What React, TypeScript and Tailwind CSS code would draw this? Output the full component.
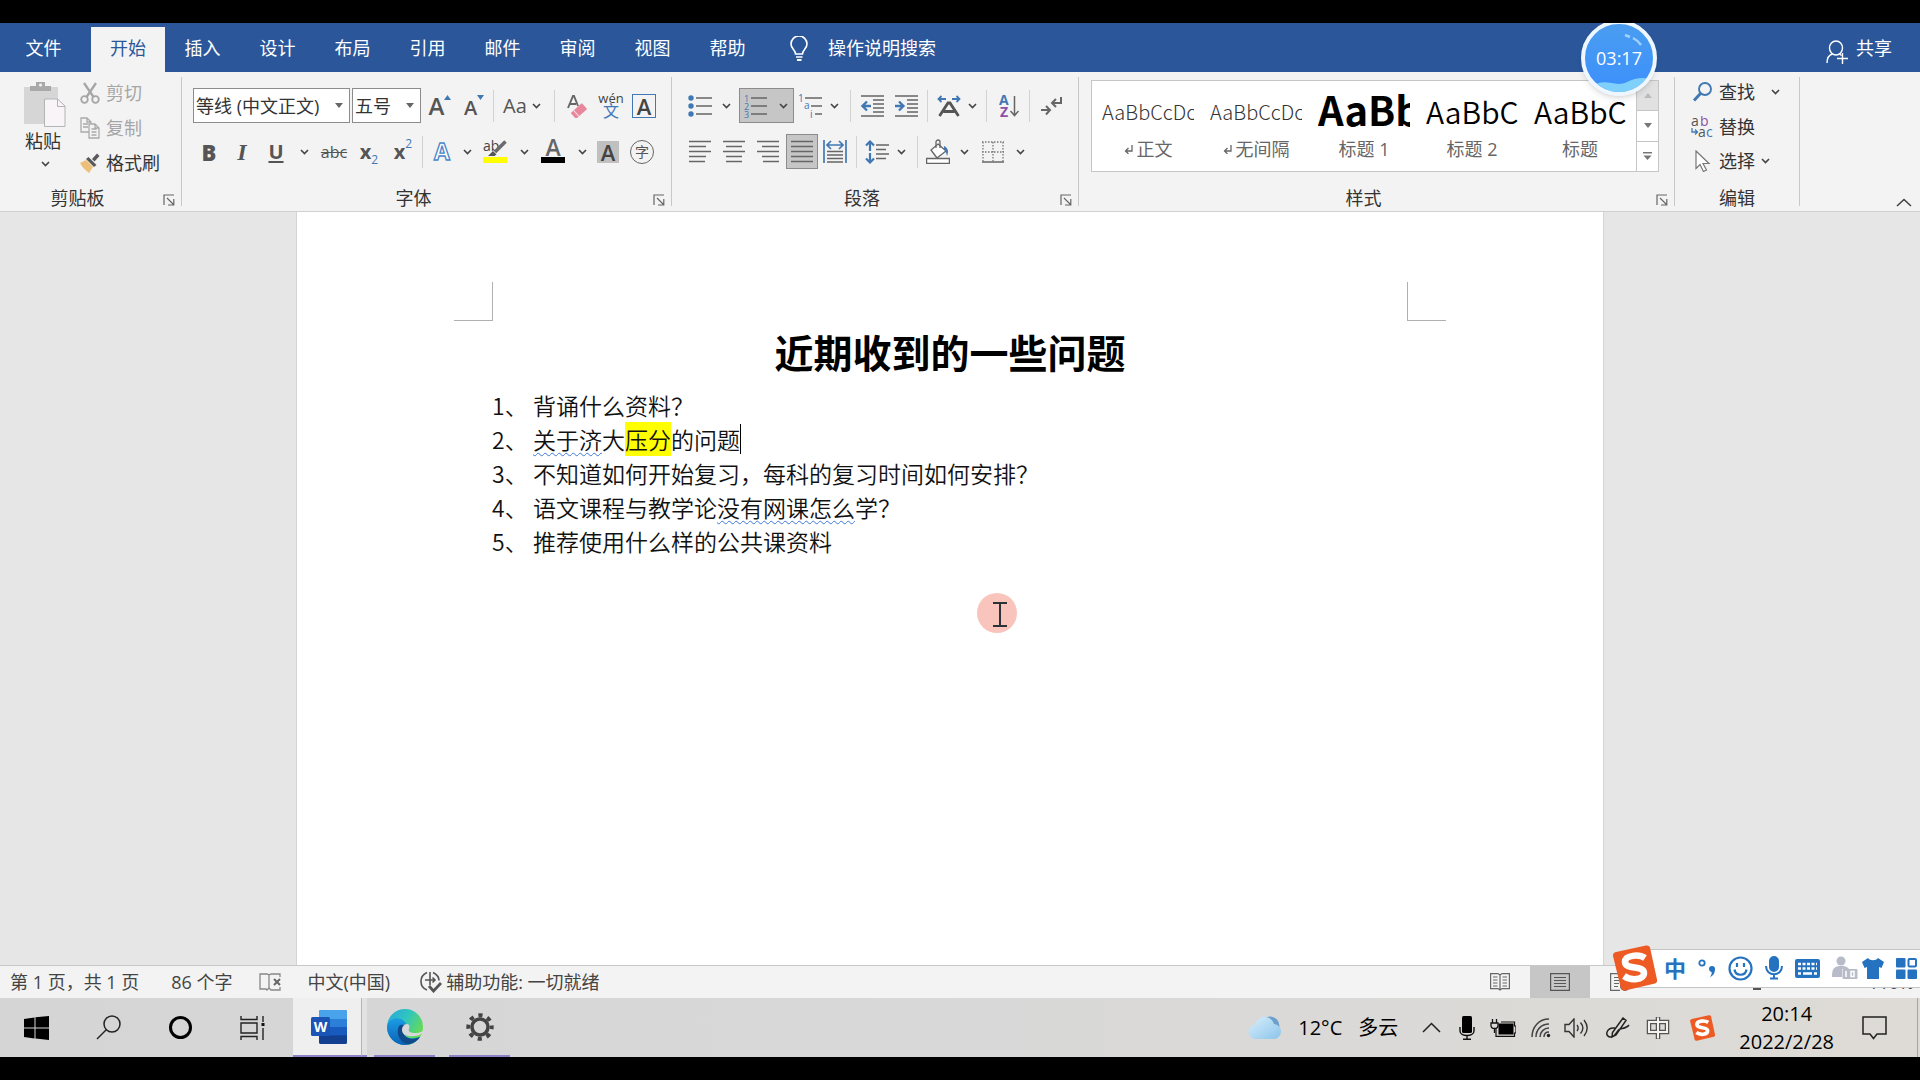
import type { ReactNode } from 'react'

const BLUE = '#4178b4'
const GREY = '#555555'

const TABS = ['插入', '设计', '布局', '引用', '邮件', '审阅', '视图', '帮助']

const STYLES = [
  { name: '正文', sample: 'AaBbCcDc', mark: true, look: 'text-xl leading-[62px] font-light' },
  { name: '无间隔', sample: 'AaBbCcDc', mark: true, look: 'text-xl leading-[62px] font-light' },
  { name: '标题 1', sample: 'AaBb', mark: false, look: 'text-[40px] leading-[56px] font-bold text-black' },
  { name: '标题 2', sample: 'AaBbC', mark: false, look: 'text-3xl leading-[60px] font-[350] text-black' },
  { name: '标题', sample: 'AaBbC', mark: false, look: 'text-3xl leading-[60px] font-[350] text-black' },
]

function Chevron({ className = 'w-5' }: { className?: string }) {
  return (
    <span className={`flex shrink-0 justify-center ${className}`}>
      <svg width="9" height="6" viewBox="0 0 9 6" fill="none" stroke="#444" strokeWidth="1.6">
        <path d="M1 1l3.5 3.5L8 1" />
      </svg>
    </span>
  )
}

function Tool({ label, className = 'w-[34px]', children }: { label: string; className?: string; children: ReactNode }) {
  return (
    <button type="button" aria-label={label} className={`flex h-full shrink-0 items-center justify-center ${className}`}>
      {children}
    </button>
  )
}

function Divider({ className = '' }: { className?: string }) {
  return <span className={`h-8 w-px shrink-0 bg-[#d2d2d2] ${className}`} />
}

function Group({ name, launcher, className, children }: { name: string; launcher?: boolean; className: string; children: ReactNode }) {
  return (
    <>
      <section aria-label={name} className={`flex shrink-0 flex-col ${className}`}>
        <div className="flex-1">{children}</div>
        <div className="mb-px flex h-6 items-center">
          <span className="flex-1 text-center">{name}</span>
          {launcher && (
            <button type="button" aria-label={`${name}设置`} className="flex w-[26px] justify-end pt-1 pr-1.5">
              <svg className="shrink-0" width="12" height="12" viewBox="0 0 12 12" fill="none" stroke="#666" strokeWidth="1.2">
                <path d="M1 11V1h10M4 4l6.5 6.5M10.8 5v6H5" />
              </svg>
            </button>
          )}
        </div>
      </section>
      <span className="mt-[5px] mb-[5px] w-px shrink-0 bg-[#c8c8c8]" />
    </>
  )
}

/* horizontal rules of paragraph icons, each one [x1, x2] */
function Lines({ rows, step = 5 }: { rows: number[][]; step?: number }) {
  return (
    <svg width="22" height="23" viewBox="0 0 22 23" stroke="#666" strokeWidth="1.5">
      {rows.map(([a, b], i) => (
        <path key={i} d={`M${a} ${1.5 + i * step}H${b}`} />
      ))}
    </svg>
  )
}

function Clipboard() {
  return (
    <Group name="剪贴板" launcher className="w-[181px]">
      <div className="flex pt-[3px]">
        <button type="button" className="flex w-[72px] flex-col items-center pt-1.5 pl-[18px]">
          <svg width="42" height="46" viewBox="0 0 42 46">
            <path d="M0 6h34v37H0z" fill="#d6d6d6" />
            <path d="M6 10V5h6V1h9v4h6v5z" fill="#a9a9a9" />
            <circle cx="16.500" cy="4" r="1.600" fill="#f3f3f3" />
            <path d="M20.500 18h13l7.500 7v20.500H20.500z" fill="#f8f4f8" stroke="#b4b4b4" />
            <path d="M33.500 18v7.500H41" fill="none" stroke="#b4b4b4" />
          </svg>
          <span className="mt-0.5 pr-1 leading-6">粘贴</span>
          <Chevron className="mt-2 w-5" />
        </button>
        <div className="flex flex-col pl-2">
          <button type="button" className="flex h-[35px] items-center gap-1.5 text-[#a6a6a6]">
            <svg width="20" height="22" viewBox="0 0 20 22" fill="none" stroke="#a6a6a6" strokeWidth="1.8">
              <circle cx="4.500" cy="17.500" r="3.300" />
              <circle cx="15.500" cy="17.500" r="3.300" />
              <path d="M4 1l9.500 14M16 1L6.500 15" strokeWidth="2.300" />
            </svg>
            剪切
          </button>
          <button type="button" className="flex h-[35px] items-center gap-1.5 text-[#a6a6a6]">
            <svg width="20" height="22" viewBox="0 0 20 22" fill="#f3f3f3" stroke="#ababab" strokeWidth="1.300">
              <path d="M1 1h6l4 4v10H1zM7 1v4h4M3 7h5M3 10h5" />
              <path d="M9 7h6l4 4v10H9zM15 7v4h4M11.500 12h5M11.500 15h5M11.500 18h5" />
            </svg>
            复制
          </button>
          <button type="button" className="flex h-[35px] items-center gap-1.5">
            <svg width="20" height="20" viewBox="0 0 20 20">
              <path d="M0 10l6-3 7 7-4 6c-4-3-7-6-9-10z" fill="#eebf78" />
              <path d="M6 6l2.500-2 8 8-2.500 2z" fill="#5a5a5a" />
              <path d="M12 6l5-5.500 2.500 2.500-5 5.500z" fill="#5a5a5a" />
            </svg>
            格式刷
          </button>
        </div>
      </div>
    </Group>
  )
}

function Combo({ label, value, className }: { label: string; value: string; className: string }) {
  return (
    <span className={`relative mr-0.5 flex h-[35px] shrink-0 ${className}`}>
      <select aria-label={label} className="w-full appearance-none border border-[#8c8c8c] bg-white pl-0.5 text-[#333]">
        <option>{value}</option>
      </select>
      <svg className="pointer-events-none absolute top-[15px] right-[7px]" width="8" height="5" viewBox="0 0 8 5">
        <path d="M0 0h8L4 5z" fill="#666" />
      </svg>
    </span>
  )
}

function FontGroup() {
  return (
    <Group name="字体" launcher className="w-[489px]">
      <div className="flex flex-col gap-[11px] pt-4 pl-[11px] text-[#555]">
        <div className="flex h-[35px] items-center">
          <Combo label="字体" value="等线 (中文正文)" className="w-[157px]" />
          <Combo label="字号" value="五号" className="w-[69px]" />
          <Tool label="增大字号">
            <span className="text-2xl leading-none font-semibold">A</span>
            <svg className="mb-4" width="7" height="5" viewBox="0 0 7 5"><path d="M0 5h7L3.500 0z" fill={BLUE} /></svg>
          </Tool>
          <Tool label="减小字号">
            <span className="pt-1 text-xl leading-none font-semibold">A</span>
            <svg className="mb-4" width="7" height="5" viewBox="0 0 7 5"><path d="M0 0h7L3.500 5z" fill={BLUE} /></svg>
          </Tool>
          <Divider className="mx-0.5" />
          <Tool label="更改大小写" className="w-[58px]">
            <span className="text-xl font-medium">Aa</span>
            <Chevron />
          </Tool>
          <Divider className="mr-1.5" />
          <Tool label="清除格式">
            <svg width="22" height="24" viewBox="0 0 22 24">
              <path d="M1 14L6 2h1l4 10M3 10h6" fill="none" stroke="#666" strokeWidth="1.900" />
              <g transform="rotate(-42 13 16)">
                <rect x="4" y="12" width="15" height="8" rx="1" fill="#e8879c" />
                <path d="M8 12v8" stroke="#f7d5dc" strokeWidth="1.200" />
              </g>
            </svg>
          </Tool>
          <Tool label="拼音指南" className="w-8 flex-col">
            <span className="text-[13px] leading-[10px] text-[#444]">wén</span>
            <span className="text-base leading-4 text-[#3f78b8]">文</span>
          </Tool>
          <Tool label="字符边框">
            <span className="flex size-6 items-center justify-center border border-[#4178b4] text-[22px] leading-none font-semibold text-[#444]">A</span>
          </Tool>
        </div>
        <div className="flex h-[35px] items-center">
          <Tool label="加粗" className="w-8"><span className="text-[22px] leading-none font-extrabold">B</span></Tool>
          <Tool label="倾斜"><span className="font-['Liberation_Serif',serif] text-2xl leading-none font-bold italic">I</span></Tool>
          <Tool label="下划线"><span className="text-xl font-bold underline decoration-2 underline-offset-2">U</span></Tool>
          <Chevron className="w-[23px]" />
          <Tool label="删除线" className="w-9"><span className="text-base line-through">abc</span></Tool>
          <Tool label="下标">
            <span className="text-xl leading-none font-bold">x</span>
            <span className="mt-4 text-xs leading-none text-[#4178b4]">2</span>
          </Tool>
          <Tool label="上标">
            <span className="text-xl leading-none font-bold">x</span>
            <span className="mb-4 text-xs leading-none text-[#4178b4]">2</span>
          </Tool>
          <Divider className="mx-0.5" />
          <Tool label="文本效果">
            <svg width="22" height="24" viewBox="0 0 22 24">
              <text x="11" y="20" textAnchor="middle" fontSize="23" fontWeight="700" fill="#fff" stroke="#4a86c8" strokeWidth="1.300">A</text>
            </svg>
          </Tool>
          <Chevron className="w-4" />
          <Tool label="突出显示" className="w-10">
            <svg width="24" height="25" viewBox="0 0 24 25">
              <text x="0" y="12" fontSize="14" fill="#444">ab</text>
              <path d="M22.500 2.500L12 13" stroke="#6b6b6b" strokeWidth="3.500" />
              <path d="M5 17l5-5 3.500 3.500-2 1.500z" fill="#555" />
              <path d="M0 18h24v6H0z" fill="#ff0" />
            </svg>
          </Tool>
          <Chevron className="w-[18px]" />
          <Tool label="字体颜色" className="w-10">
            <svg width="24" height="25" viewBox="0 0 24 25">
              <text x="12" y="17" textAnchor="middle" fontSize="23" fontWeight="600" fill="#666">A</text>
              <path d="M0 18h24v6H0z" />
            </svg>
          </Tool>
          <Chevron className="w-[18px]" />
          <Tool label="字符底纹">
            <span className="flex size-[22px] items-center justify-center bg-[#c0c0c0] text-[22px] leading-none font-semibold text-[#444]">A</span>
          </Tool>
          <Tool label="带圈字符">
            <span className="flex size-6 items-center justify-center rounded-full border border-[#666] text-sm leading-none">字</span>
          </Tool>
        </div>
      </div>
    </Group>
  )
}

function ParagraphGroup() {
  return (
    <Group name="段落" launcher className="w-[406px]">
      <div className="flex flex-col gap-[11px] pt-4 pl-[11px]">
        <div className="flex h-[35px] items-center">
          <Tool label="项目符号">
            <svg width="24" height="24" viewBox="0 0 24 24" fill={BLUE} stroke="#666" strokeWidth="1.400">
              <path d="M8 4h16M8 12h16M8 20h16" />
              <g stroke="none"><circle cx="3" cy="4" r="2.700" /><circle cx="3" cy="12" r="2.700" /><circle cx="3" cy="20" r="2.700" /></g>
            </svg>
          </Tool>
          <Chevron className="w-[18px]" />
          <button type="button" aria-label="编号" className="ml-1 flex h-full w-[55px] items-center justify-between border border-[#8c8c8c] bg-[#c6c6c6] pl-1">
            <svg width="23" height="24" viewBox="0 0 23 24" fill={BLUE} fontSize="9">
              <text x="0" y="7.500">1</text><text x="0" y="15.500">2</text><text x="0" y="23.500">3</text>
              <path d="M7 4h16M7 12h16M7 20h16" stroke="#666" strokeWidth="1.400" />
            </svg>
            <Chevron />
          </button>
          <Tool label="多级列表" className="w-8">
            <svg width="24" height="24" viewBox="0 0 24 24" fill={BLUE} fontSize="10">
              <text x="0" y="7.500">1</text><text x="6" y="15">a</text><text x="12" y="23.500">i</text>
              <path d="M7 4h17M13 12h11M17 20h7" stroke="#666" strokeWidth="1.400" />
            </svg>
          </Tool>
          <Chevron className="w-4" />
          <Divider className="mr-1 ml-2" />
          <Tool label="减少缩进">
            <svg width="23" height="22" viewBox="0 0 23 22" fill="none">
              <path d="M0 1h23M12 5h11M12 9h11M12 13h11M12 17h11M0 21h23" stroke="#666" strokeWidth="1.300" />
              <path d="M10 11H2M6 6.500L1.500 11 6 15.500" stroke={BLUE} strokeWidth="2.300" />
            </svg>
          </Tool>
          <Tool label="增加缩进">
            <svg width="23" height="22" viewBox="0 0 23 22" fill="none">
              <path d="M0 1h23M12 5h11M12 9h11M12 13h11M12 17h11M0 21h23" stroke="#666" strokeWidth="1.300" />
              <path d="M0 11h8M4 6.500L8.500 11 4 15.500" stroke={BLUE} strokeWidth="2.300" />
            </svg>
          </Tool>
          <Divider className="mx-1" />
          <Tool label="中文版式">
            <svg width="24" height="22" viewBox="0 0 24 22" fill="none">
              <path d="M9 4H1.500M4.500 1L1.500 4l3 3M15 4h7.500M19.500 1l3 3-3 3" stroke={BLUE} strokeWidth="1.800" />
              <path d="M2.500 21L11 8h2l8.500 13M6.500 16.500h11" stroke={GREY} strokeWidth="2.800" />
            </svg>
          </Tool>
          <Chevron className="w-3" />
          <Divider className="mr-1.5 ml-2" />
          <Tool label="排序" className="w-8">
            <svg width="20" height="24" viewBox="0 0 20 24">
              <text x="0" y="11" fontSize="14" fontWeight="700" fill={BLUE}>A</text>
              <text x="1" y="23" fontSize="14" fontWeight="700" fill="#8c50a8">Z</text>
              <path d="M15.500 2v19M11.500 17l4 4.500 4-4.500" fill="none" stroke="#666" strokeWidth="1.500" />
            </svg>
          </Tool>
          <Divider className="mx-1" />
          <Tool label="显示编辑标记">
            <svg width="21" height="20" viewBox="0 0 21 20" fill="none" stroke="#666" strokeWidth="2">
              <path d="M20 1v6h-8M15 3l-4 4 4 4M0 14h9M5 10l4 4-4 4.500" />
            </svg>
          </Tool>
        </div>
        <div className="flex h-[35px] items-center">
          <Tool label="左对齐"><Lines rows={[[0, 22], [0, 17], [0, 22], [0, 17], [0, 16]]} /></Tool>
          <Tool label="居中"><Lines rows={[[0, 22], [3, 19], [0, 22], [3, 19], [3, 19]]} /></Tool>
          <Tool label="右对齐"><Lines rows={[[0, 22], [5, 22], [0, 22], [5, 22], [6, 22]]} /></Tool>
          <Tool label="两端对齐" className="ml-px w-8 border border-[#8c8c8c] bg-[#c6c6c6]">
            <Lines rows={[[0, 22], [0, 22], [0, 22], [0, 22], [0, 22]]} />
          </Tool>
          <Tool label="分散对齐">
            <svg width="24" height="24" viewBox="0 0 24 24" fill="none">
              <path d="M1 0v23M23 0v23M4 5h16M8 1L4 5l4 4M16 1l4 4-4 4" stroke={BLUE} strokeWidth="1.700" />
              <path d="M4 11.500h16M4 15h16M4 18.500h16M4 22h16" stroke="#666" strokeWidth="1.400" />
            </svg>
          </Tool>
          <Divider className="mx-1" />
          <Tool label="行距" className="w-8">
            <svg width="24" height="24" viewBox="0 0 24 24" fill="none">
              <path d="M5 11V2M1 5.500l4-4 4 4M5 13v9M1 18.500l4 4 4-4" stroke={BLUE} strokeWidth="2.200" />
              <path d="M11 5h13M11 9.500h10M11 14h13M11 18.500h10" stroke="#666" strokeWidth="1.400" />
            </svg>
          </Tool>
          <Chevron className="w-4" />
          <Divider className="mr-1 ml-2" />
          <Tool label="底纹" className="w-8">
            <svg width="24" height="25" viewBox="0 0 24 25" fill="none" stroke="#666" strokeWidth="1.300">
              <path d="M12 5l8 7-9 7-6-8z" fill="#fff" />
              <path d="M10 9V3a2 2 0 014 0v6" />
              <path d="M18 7c4 2 5 5 3 10-1-4-2-6-3-7z" fill={BLUE} stroke="none" />
              <path d="M.600 19.500h22.800v5H.600z" fill="#fff" />
            </svg>
          </Tool>
          <Chevron />
          <Tool label="边框" className="ml-0.5 w-[34px]">
            <svg width="22" height="22" viewBox="0 0 22 22" fill="none" stroke="#777" strokeWidth="1.300">
              <path d="M0 1h22M1 1v20M21 1v20M11 1v20M0 11h22" strokeDasharray="1.500 1.500" />
              <path d="M0 21h22" strokeWidth="1.700" />
            </svg>
          </Tool>
          <Chevron />
        </div>
      </div>
    </Group>
  )
}

function StylesGroup() {
  return (
    <Group name="样式" launcher className="w-[595px]">
      <div className="pt-2 pl-3">
        <div className="flex h-[92px] w-[568px] border border-[#c6c6c6] bg-white">
          {STYLES.map(s => (
            <button key={s.name} type="button" className="flex w-[108px] flex-col items-center pr-1.5 pl-2.5">
              <span className={`h-[58px] w-full overflow-hidden text-left font-['Noto_Sans_CJK_SC',sans-serif] ${s.look}`}>
                {s.sample}
              </span>
              <span className="-mt-0.5 flex items-center gap-1 leading-6 text-[#666]">
                {s.mark && (
                  <svg width="9" height="10" viewBox="0 0 9 10" fill="none" stroke="#666" strokeWidth="1.300">
                    <path d="M8 1v6H2M4.500 4L1.500 7l3 3" />
                  </svg>
                )}
                {s.name}
              </span>
            </button>
          ))}
          <div className="ml-1 flex flex-1 flex-col border-l border-[#c6c6c6]">
            <button type="button" aria-label="上一行" className="flex flex-1 items-center justify-center bg-[#e1e1e1]">
              <svg width="8" height="5" viewBox="0 0 8 5"><path d="M0 5h8L4 0z" fill="#bbb" /></svg>
            </button>
            <button type="button" aria-label="下一行" className="flex flex-1 items-center justify-center border-y border-[#c6c6c6]">
              <svg width="8" height="5" viewBox="0 0 8 5"><path d="M0 0h8L4 5z" fill="#777" /></svg>
            </button>
            <button type="button" aria-label="其他" className="flex flex-1 items-center justify-center">
              <svg width="9" height="8" viewBox="0 0 9 8"><path d="M0 0h9v1.500H0zM.500 3.500h8L4.500 8z" fill="#777" /></svg>
            </button>
          </div>
        </div>
      </div>
    </Group>
  )
}

function EditGroup() {
  return (
    <Group name="编辑" className="w-[124px]">
      <div className="flex flex-col items-start pt-0.5 pl-4">
        <button type="button" className="flex h-[35px] items-center">
          <svg className="mr-1.5" width="22" height="20" viewBox="0 0 22 20" fill="none" stroke={BLUE}>
            <circle cx="14" cy="7" r="6" strokeWidth="1.900" />
            <path d="M9.500 11.500L3 18.500" strokeWidth="3" />
          </svg>
          查找
          <Chevron className="ml-2 w-6" />
        </button>
        <button type="button" className="flex h-[35px] items-center">
          <svg className="mr-1.5" width="22" height="22" viewBox="0 0 22 22" fontSize="14">
            <text x="0" y="10" fill="#555">a</text><text x="9" y="10" fill="#8c50a8">b</text>
            <text x="7" y="21" fill="#555">a</text><text x="15" y="21" fill={BLUE}>c</text>
            <path d="M1 12v4h5M4 13.500L6.500 16 4 18.500" fill="none" stroke={BLUE} strokeWidth="1.300" />
          </svg>
          替换
        </button>
        <button type="button" className="flex h-[34px] items-center">
          <svg className="mr-1.5" width="22" height="22" viewBox="0 0 22 22" fill="#fff" stroke="#777" strokeWidth="1.200">
            <path d="M5 1l13 12.500h-6l3.500 6.500-3 1.500-3.500-7-4 4z" />
          </svg>
          选择
          <Chevron className="w-5" />
        </button>
      </div>
    </Group>
  )
}

function TitleTabs() {
  return (
    <nav className="relative flex h-[49px] shrink-0 items-end bg-[#2b579a] text-white">
      <button type="button" className="h-[45px] w-[91px] pb-[3px] pr-1">文件</button>
      <button type="button" className="h-[45px] w-[74px] bg-[#f3f3f3] pb-[3px] text-[#2b579a]">开始</button>
      {TABS.map(tab => (
        <button key={tab} type="button" className="h-[45px] w-[75px] pb-[3px]">{tab}</button>
      ))}
      <button type="button" className="flex h-[45px] items-center gap-5 pb-[3px] pl-[25px]">
        <svg width="18" height="25" viewBox="0 0 18 25" fill="none" stroke="#fff" strokeWidth="1.600">
          <path d="M5.500 18c0-4-4.500-5-4.500-10a8 8 0 0116 0c0 5-4.500 6-4.500 10zM6 21h6.500" />
          <path d="M7 24h4.500" strokeWidth="2" />
        </svg>
        操作说明搜索
      </button>
      <button type="button" className="ml-auto flex h-[45px] items-center gap-2 pr-7 pb-[3px]">
        <svg className="mt-2" width="22" height="24" viewBox="0 0 22 24" fill="none" stroke="#fff" strokeWidth="1.400">
          <ellipse cx="10" cy="8" rx="6.500" ry="7" />
          <path d="M1 23c0-5 2-8 5.500-9M13.500 14l2 1.500M11 18.500h11M16.500 13v11" />
        </svg>
        共享
      </button>
      {/* recorder timer, floats over the ribbon */}
      <div className="absolute top-[-3px] right-[263px] z-10 flex size-[76px] items-center justify-center overflow-hidden rounded-full border-[4px] border-[#eef6ff] bg-linear-to-b from-[#4a9df0] to-[#3c8ffb] shadow-md">
        <svg className="absolute inset-0" width="68" height="68" viewBox="0 0 68 68">
          <path d="M8 62c12-9 22 2 34-4 8-4 15-5 24-3v15H8z" fill="#7fd0fb" />
          <path d="M40 11l5 2M48 14c4 2 6 4 8 7" stroke="#9fd0ff" strokeWidth="2.500" fill="none" />
        </svg>
        <span className="relative">03:17</span>
      </div>
    </nav>
  )
}

function Wavy({ children }: { children: ReactNode }) {
  return <span className="underline decoration-[#3f78d8] decoration-wavy decoration-1 underline-offset-3">{children}</span>
}

function Document() {
  return (
    <main className="flex flex-1 justify-center bg-[#e6e6e6] pr-5">
      <article className="w-[1308px] border-x border-[#d4d4d4] bg-white px-[157px] pt-[70px] font-['Noto_Sans_CJK_SC',sans-serif] text-[23px] font-[350] text-[#111]">
        <div className="flex justify-between">
          <span className="size-[39px] border-r border-b border-[#b0b0b0]" />
          <span className="size-[39px] border-b border-l border-[#b0b0b0]" />
        </div>
        <div className="px-[38px]">
          <h1 className="text-center text-[39px] leading-[60px] font-bold text-black">近期收到的一些问题</h1>
          <ol className="mt-[7px] leading-[34px]">
            <li className="flex"><span className="w-[41px]">1、</span><span>背诵什么资料？</span></li>
            <li className="flex">
              <span className="w-[41px]">2、</span>
              <span><Wavy>关于济</Wavy>大<mark className="bg-[#ff0] text-inherit">压分</mark>的问题</span>
              <span className="my-0.5 w-px bg-black" />
            </li>
            <li className="flex"><span className="w-[41px]">3、</span><span>不知道如何开始复习，每科的复习时间如何安排？</span></li>
            <li className="flex"><span className="w-[41px]">4、</span><span>语文课程与教学论<Wavy>没有网课怎么</Wavy>学？</span></li>
            <li className="flex"><span className="w-[41px]">5、</span><span>推荐使用什么样的公共课资料</span></li>
          </ol>
        </div>
      </article>
    </main>
  )
}

function SogouLogo({ size }: { size: number }) {
  return (
    <svg width={size} height={size} viewBox="0 0 46 46">
      <path d="M5 7L35 .500q3-.500 4 2l7 32q.500 3-2 4L14 45.500q-3 .500-4-2L2 11q-.500-3 3-4z" fill="#ee5a24" />
      <path d="M34 13c-6-4-20-3-20 4 0 8 19 3 19 11 0 7-13 8-20 3" fill="none" stroke="#fff" strokeWidth="6.500" />
    </svg>
  )
}

function InputBar() {
  return (
    <div className="absolute right-0 bottom-[7px] z-10 flex items-center">
      <span className="z-10 -mr-[22px]"><SogouLogo size={46} /></span>
      <div className="flex h-[39px] w-[285px] items-center gap-3 border-y border-[#c4c4c4] bg-white pl-[29px] text-[#2472c0]">
        <span className="text-[22px] leading-none font-bold">中</span>
        <svg width="18" height="20" viewBox="0 0 18 20">
          <circle cx="4" cy="5" r="2.700" fill="none" stroke="#2472c0" strokeWidth="1.800" />
          <path d="M11 11a3 3 0 116 0c0 4-2 7-5 8 1.500-2 2-3.500 1.500-5a3 3 0 01-2.500-3z" fill="#2472c0" />
        </svg>
        <svg width="25" height="25" viewBox="0 0 25 25" fill="none" stroke="#2472c0" strokeWidth="2.200">
          <circle cx="12.500" cy="12.500" r="11" />
          <path d="M6.500 13.500c1 7 11 7 12 0M9 7v4M16 7v4" />
        </svg>
        <svg width="18" height="24" viewBox="0 0 18 24" fill="none" stroke="#2472c0" strokeWidth="2">
          <rect x="5" y="1" width="8" height="14" rx="4" fill="#2472c0" />
          <path d="M1 10c0 11 16 11 16 0M9 18v5M5 22.500h8" />
        </svg>
        <svg width="25" height="19" viewBox="0 0 25 19">
          <rect width="25" height="19" rx="2" fill="#2472c0" />
          <path d="M3 5h19M3 9.500h19" stroke="#fff" strokeWidth="2.500" strokeDasharray="3 1.500" />
          <path d="M3 14.500h3M8 14.500h9M19 14.500h3" stroke="#fff" strokeWidth="2.500" />
        </svg>
        <svg className="-mr-2" width="26" height="24" viewBox="0 0 26 24" fill="#b8bcc8">
          <circle cx="9" cy="5" r="4.500" />
          <path d="M0 20c0-8 3-10 9-10s7 2 8 3h-7v8H0z" />
          <rect x="10.500" y="13" width="15" height="10" rx="1" />
          <path d="M14 15v6M19 15.500h3v5h-3z" stroke="#fff" strokeWidth="1.500" fill="none" />
        </svg>
        <svg width="22" height="21" viewBox="0 0 22 21">
          <path d="M6 0c2 3 8 3 10 0l6 4-2.500 6-2.500-1v12H5V9l-2.500 1L0 4z" fill="#2472c0" />
        </svg>
        <svg width="21" height="21" viewBox="0 0 21 21" fill="#2472c0">
          <rect width="9.500" height="9.500" rx="1" /><rect y="11.500" width="9.500" height="9.500" rx="1" />
          <rect x="11.500" y="11.500" width="9.500" height="9.500" rx="1" />
          <rect x="12.500" y="1" width="7.500" height="7.500" rx="1" fill="none" stroke="#2472c0" strokeWidth="2" />
        </svg>
      </div>
    </div>
  )
}

function StatusBar() {
  return (
    <footer className="relative flex h-[33px] shrink-0 items-center border-t border-[#c8c8c8] bg-[#f3f3f3] pl-2.5 text-[#444]">
      <span>第 1 页，共 1 页</span>
      <span className="ml-8">86 个字</span>
      <svg className="ml-[26px]" width="23" height="20" viewBox="0 0 23 20" fill="none" stroke="#888" strokeWidth="1.300">
        <path d="M10 3v13l-2 2-1-1H1V2h7zM10 3l2-1h9v3M10 16l2 2h9v-3" />
        <path d="M15 7l6 6M21 7l-6 6" strokeWidth="2" stroke="#666" />
      </svg>
      <span className="ml-[26px]">中文(中国)</span>
      <svg className="ml-[30px]" width="22" height="22" viewBox="0 0 22 22" fill="none" stroke="#555" strokeWidth="1.600">
        <path d="M7 1.500C-1 5-1 16 7 19M13 1.500c4 2 6 5 6 8M10 1v13M5 9h10M12.500 6.500L15 9l-2.500 2.500" />
        <path d="M9 15l4.500 5L21 12" strokeWidth="2.800" />
      </svg>
      <span className="ml-1">辅助功能: 一切就绪</span>
      <div className="ml-auto flex h-full items-center">
        <button type="button" aria-label="阅读视图" className="flex w-[60px] justify-center">
          <svg width="20" height="18" viewBox="0 0 20 18" fill="none" stroke="#666" strokeWidth="1.200">
            <path d="M10 2v15M10 2L8 .600H.600v15H8L10 17l2-1.400h7.400v-15H12zM3 4h4.500M3 7h4.500M3 10h4.500M3 13h4.500M12.500 4H17M12.500 7H17M12.500 10H17M12.500 13H17" />
          </svg>
        </button>
        <button type="button" aria-label="页面视图" className="flex h-full w-[60px] items-center justify-center bg-[#c6c6c6]">
          <svg width="20" height="18" viewBox="0 0 20 18" fill="none" stroke="#555" strokeWidth="1.200">
            <path d="M.600.600h18.800v16.800H.600zM4 4.500h12M4 7.500h12M4 10.500h12M4 13.500h12" />
          </svg>
        </button>
        <button type="button" aria-label="Web 版式" className="flex w-[60px] justify-center">
          <svg width="20" height="18" viewBox="0 0 20 18" fill="none" stroke="#666" strokeWidth="1.200">
            <path d="M10 17.400H.600V.600h18.800V8M4 4.500h12M4 7.500h8M4 10.500h5M4 13.500h4" />
            <circle cx="15" cy="13" r="4.400" />
          </svg>
        </button>
        <input
          type="range"
          aria-label="缩放"
          defaultValue={52}
          className="ml-4 w-[174px] appearance-none bg-transparent [&::-webkit-slider-thumb]:h-4 [&::-webkit-slider-thumb]:w-2 [&::-webkit-slider-thumb]:appearance-none [&::-webkit-slider-thumb]:bg-[#555]"
        />
        <span className="ml-7 pr-1.5">110%</span>
      </div>
      <InputBar />
    </footer>
  )
}

function Taskbar() {
  return (
    <footer className="flex h-[59px] shrink-0 items-stretch bg-linear-to-r from-[#d5d5d5] via-[#d8d8d8] to-[#dedbd6] text-black">
      <button type="button" aria-label="开始菜单" className="flex w-[72px] items-center justify-center">
        <svg width="25" height="24" viewBox="0 0 25 24">
          <path d="M0 3l10.500-1.500v10H0zM11.500 1.300L25 0v11.500H11.500zM0 12.500h10.500v10L0 21zM11.500 12.500H25V24l-13.500-1.500z" />
        </svg>
      </button>
      <button type="button" aria-label="搜索" className="flex w-[73px] items-center justify-center">
        <svg width="25" height="25" viewBox="0 0 25 25" fill="none" stroke="#222" strokeWidth="1.500">
          <circle cx="16" cy="9" r="8" /><path d="M10.500 14.500L1 24" />
        </svg>
      </button>
      <button type="button" aria-label="Cortana" className="flex w-[70px] items-center justify-center">
        <span className="size-[23px] rounded-full border-[3px] border-black" />
      </button>
      <button type="button" aria-label="任务视图" className="flex w-[78px] items-center justify-center pr-1">
        <svg width="25" height="24" viewBox="0 0 25 24" fill="none" stroke="#222" strokeWidth="1.400">
          <path d="M1 7h16v10H1zM1 0v3.500h16V0M1 24v-3.500h16V24M23 0v6M23 12v12" />
          <path d="M21.500 7h3v3h-3z" fill="#111" stroke="none" />
        </svg>
      </button>
      <button type="button" aria-label="Word" className="flex w-[68px] items-center justify-center border-b-2 border-[#8a83c8] bg-[#efefef] pl-1">
        <svg width="36" height="34" viewBox="0 0 36 34">
          <rect x="8" width="28" height="34" rx="2" fill="#1b4db0" />
          <path d="M10 0h24a2 2 0 012 2v7H8V2a2 2 0 012-2z" fill="#48a3ea" />
          <path d="M8 9h28v8H8z" fill="#2c7fd8" /><path d="M8 17h28v8.500H8z" fill="#185abd" /><path d="M8 25.500h28V32a2 2 0 01-2 2H10a2 2 0 01-2-2z" fill="#123f90" />
          <rect y="7" width="19" height="19" rx="1.500" fill="#1a54b4" />
          <text x="9.500" y="22" textAnchor="middle" fontSize="14" fontWeight="700" fill="#fff">W</text>
        </svg>
      </button>
      <span className="mr-[7px] w-1.5 border-b-2 border-l border-[#8a83c8] border-l-[#b5b5b5] bg-[#e2e2e2]" />
      <button type="button" aria-label="Edge" className="flex w-[61px] items-center justify-center border-b-2 border-[#8a83c8]">
        <svg width="36" height="36" viewBox="0 0 36 36">
          <defs>
            <linearGradient id="edgeTop" x1="0" y1="0" x2="1" y2=".600">
              <stop offset="0" stopColor="#23a6dd" /><stop offset=".500" stopColor="#30c5c0" /><stop offset="1" stopColor="#6bdc4c" />
            </linearGradient>
            <linearGradient id="edgeLow" x1="0" y1="0" x2="0" y2="1">
              <stop offset="0" stopColor="#1b9de2" /><stop offset="1" stopColor="#0d62b8" />
            </linearGradient>
          </defs>
          <circle cx="18" cy="18" r="18" fill="url(#edgeTop)" />
          <path d="M0 18C1 10 9 8 14 10c4 2 6 5 6 8-3-2-6 0-6 4 0 6 8 9 14 7l5-1c-3 5-9 8-15 8C8 36 0 28 0 18z" fill="url(#edgeLow)" />
          <path d="M12 17c-4 8 2 18 10 18 5-1 9-4 11-7-7 4-17 1-17-6 0-2 1-4 2-5-2-2-5-1-6 0z" fill="#114a8b" />
          <path d="M20 15c-3 0-5 3-5 6 0 5 6 7 12 6 3 0 6-1 9-3v-2c-3 2-10 3-13 1-2-1-1-3-.500-5 0-2-1-3-2.500-3z" fill="#d8d8d8" />
        </svg>
      </button>
      <button type="button" aria-label="设置" className="ml-3.5 flex w-[61px] items-center justify-center border-b-2 border-[#8a83c8]">
        <svg width="28" height="28" viewBox="0 0 28 28" fill="none" stroke="#444">
          <circle cx="14" cy="14" r="8" strokeWidth="3.500" />
          <circle cx="14" cy="14" r="11.700" strokeWidth="4" strokeDasharray="4.200 4.990" strokeDashoffset="2" />
        </svg>
      </button>

      <div className="ml-auto flex items-center">
        <button type="button" className="flex items-center gap-4 text-xl">
          <svg width="34" height="24" viewBox="0 0 34 24">
            <defs>
              <linearGradient id="cloud" x1="0" y1="0" x2="1" y2="1">
                <stop offset="0" stopColor="#d8effc" /><stop offset="1" stopColor="#8cc4ea" />
              </linearGradient>
            </defs>
            <circle cx="22" cy="10" r="9.500" fill="#6c9fcb" />
            <path d="M8 23a7 7 0 01-1-14C9 3 13 0 18 1c5 1 7 4 8 7a7.500 7.500 0 01-1 15z" fill="url(#cloud)" />
          </svg>
          <span>12°C</span>
          <span>多云</span>
        </button>
        <svg className="ml-6" width="19" height="11" viewBox="0 0 19 11" fill="none" stroke="#222" strokeWidth="1.500"><path d="M1 10l8.500-8.500L18 10" /></svg>
        <svg className="ml-[18px]" width="16" height="24" viewBox="0 0 16 24">
          <rect x="3" width="10" height="17" rx="1.500" />
          <path d="M1 11v4c0 6 14 6 14 0v-4M8 20v3M4 23.300h8" fill="none" stroke="#111" strokeWidth="1.400" />
        </svg>
        <svg className="ml-[15px]" width="26" height="18" viewBox="0 0 26 18">
          <rect x="8.500" y="4.500" width="15" height="11" />
          <path d="M6 10v7.300h18.500V14H26V7h-1.500V3H11" fill="none" stroke="#111" strokeWidth="1.200" />
          <path d="M2.500 0v4M6.500 0v4M1 4h7v2.500q0 3-3.500 3T1 6.500zM4.500 9v5" fill="none" stroke="#111" strokeWidth="1.300" />
        </svg>
        <svg className="ml-[15px]" width="20" height="20" viewBox="0 0 20 20" fill="none" stroke="#444" strokeWidth="1.500">
          <path d="M1 19C1 9 8 1 18 1M5 19c0-7 5-13 13-13M9 19c0-5 4-9 9-9M13 19c0-3 2-5 5-5" />
          <circle cx="17.500" cy="17.500" r="1.700" fill="#222" stroke="none" />
        </svg>
        <svg className="ml-[13px]" width="24" height="20" viewBox="0 0 24 20" fill="none" stroke="#333" strokeWidth="1.400">
          <path d="M1 6.500h4L10 1v18l-5-5.500H1zM13 7c1.500 2 1.500 4 0 6M16.500 4.500c3 3.500 3 7.500 0 11M20 2c4 5 4 11 0 16" />
        </svg>
        <svg className="ml-[18px]" width="24" height="22" viewBox="0 0 24 22" fill="none" stroke="#222" strokeWidth="1.500">
          <path d="M17 1l3 2.500L10 18l-4 2 .500-4.500zM9 11c-9-1-11 9-4 9 5 0 5-6 9-8 4-1 7-1 9-4" />
        </svg>
        {/* input mode indicator, hollow strokes */}
        <svg className="ml-[15px]" width="26" height="26" viewBox="0 0 26 26" fill="none">
          <path d="M4 7h18v10H4zM13 2v22" stroke="#555" strokeWidth="4.500" />
          <path d="M4 7h18v10H4zM13 2.500v21" stroke="#f4f2ef" strokeWidth="2" />
        </svg>
        <span className="ml-[18px]"><SogouLogo size={26} /></span>
        <time className="ml-6 text-center text-xl leading-7">
          20:14<br />2022/2/28
        </time>
        <button type="button" aria-label="通知" className="mr-[30px] ml-7">
          <svg width="25" height="24" viewBox="0 0 25 24" fill="none" stroke="#222" strokeWidth="1.500">
            <path d="M1 1h23v17h-9l-3.500 4.500L8 18H1z" />
          </svg>
        </button>
        <span className="mr-0.5 h-[59px] w-px bg-[#a5a5a5]" />
      </div>
    </footer>
  )
}

export default function App() {
  return (
    <div className="relative flex min-h-screen flex-col overflow-hidden border-t-[23px] border-b-[23px] border-black bg-[#f3f3f3] font-['Open_Sans','Noto_Sans_CJK_SC',sans-serif] text-lg text-[#333]">
      <TitleTabs />
      <div className="flex h-[140px] shrink-0 border-b border-[#d0d0d0]">
        <Clipboard />
        <FontGroup />
        <ParagraphGroup />
        <StylesGroup />
        <EditGroup />
        <button type="button" aria-label="折叠功能区" className="ml-auto self-end pr-2 pb-1">
          <svg width="16" height="9" viewBox="0 0 16 9" fill="none" stroke="#444" strokeWidth="1.600"><path d="M1 8l7-6.500L15 8" /></svg>
        </button>
      </div>
      <Document />
      <StatusBar />
      <Taskbar />
      {/* click halo with the text pointer */}
      <svg className="pointer-events-none absolute top-[570px] left-[977px]" width="40" height="40" viewBox="0 0 40 40">
        <circle cx="20" cy="20" r="20" fill="#f9c4bb" />
        <path d="M16 10h14M16 33h14M23 10v23" stroke="#2a3436" strokeWidth="2" />
      </svg>
    </div>
  )
}
